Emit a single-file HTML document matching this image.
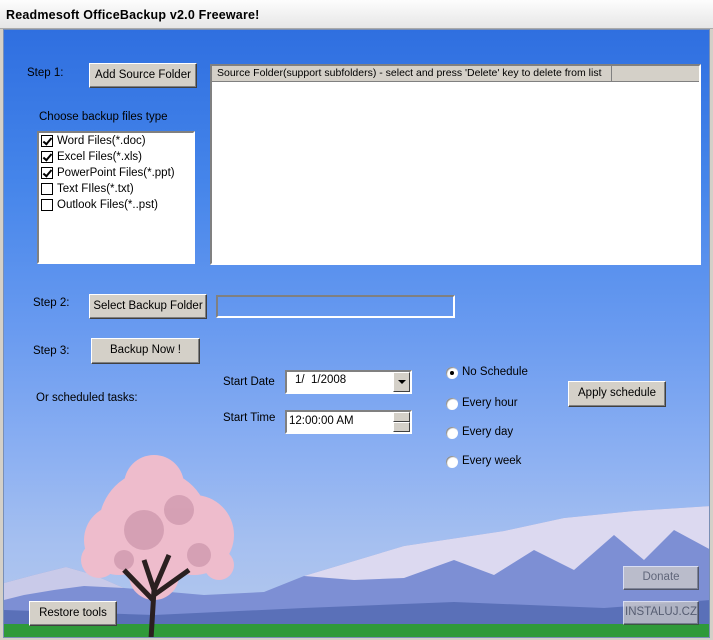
<!DOCTYPE html>
<html><head><meta charset="utf-8"><style>
*{margin:0;padding:0;box-sizing:border-box}
body{width:713px;height:640px;overflow:hidden;background:#d4d0c8;font-family:"Liberation Sans",Arial,sans-serif;font-size:11px;color:#000;position:relative}
.title{position:absolute;left:0;top:0;width:713px;height:29px;background:linear-gradient(#fdfdfd,#e6e6e6);border-bottom:1px solid #aaa;font-weight:bold;font-size:12.5px;padding:8px 0 0 6px;letter-spacing:0.2px}
.client{position:absolute;left:3px;top:29px;width:707px;height:609px;background:linear-gradient(#2f6fe0 0%,#4585ea 25%,#6a9bf0 50%,#8cb0f2 70%,#a6c0f0 85%,#b5c8ec 100%);overflow:hidden;border:1px solid #7a8fb5}
.a{position:absolute;white-space:nowrap;font-size:11.5px}
.btn{position:absolute;background:#d4d0c8;border:1px solid;border-color:#fff #404040 #404040 #fff;box-shadow:inset -1px -1px #808080;text-align:center;font-size:11.5px;color:#000;white-space:nowrap}
.lb{position:absolute;background:#fff;border:2px solid;border-color:#808080 #fff #fff #808080}
.cb{position:absolute;left:2px;width:12px;height:12px;border:1.5px solid #000;background:#fff}
.cb.c::after{content:"";position:absolute;left:3px;top:0px;width:3px;height:7px;border:solid #000;border-width:0 2px 2px 0;transform:rotate(40deg)}
.rd{position:absolute;width:12px;height:12px;border-radius:50%;background:#fff;box-shadow:inset 1px 1px 1px #888}
.rd.on::after{content:"";position:absolute;left:4px;top:4px;width:4px;height:4px;border-radius:50%;background:#000}
</style></head><body>
<div class="title">Readmesoft OfficeBackup v2.0 Freeware!</div>
<div class="client">
<svg width="707" height="609" style="position:absolute;left:0;top:0">
<polygon points="0,553 30,545 62,537 90,545 120,558 200,565 260,562 300,546 400,516 500,501 560,488 630,481 707,476 707,609 0,609" fill="#7d8fd4"/>
<polygon points="300,546 400,516 500,501 560,488 630,481 707,476 707,520 670,500 640,530 610,505 570,540 530,520 490,545 450,530 400,548 350,550" fill="#ece6f4" opacity="0.85"/>
<polygon points="0,553 30,545 62,537 90,545 120,558 80,556 50,560 20,565 0,570" fill="#dcd8ee" opacity="0.8"/>
<polygon points="0,580 150,585 300,578 450,572 600,578 707,570 707,609 0,609" fill="#5a70b8"/>
<rect x="0" y="594" width="707" height="15" fill="#2f9a3a"/>
<g fill="#eebccc">
<circle cx="150" cy="495" r="55"/><circle cx="115" cy="510" r="35"/><circle cx="190" cy="505" r="40"/><circle cx="150" cy="455" r="30"/><circle cx="95" cy="530" r="18"/><circle cx="215" cy="535" r="15"/><circle cx="150" cy="545" r="25"/>
</g>
<g fill="#b88098" opacity="0.45"><circle cx="140" cy="500" r="20"/><circle cx="175" cy="480" r="15"/><circle cx="120" cy="530" r="10"/><circle cx="195" cy="525" r="12"/></g>
<path d="M147 609 L150 560 L140 530 M150 560 L165 525 M149 570 L120 540 M150 565 L185 540" stroke="#2a2020" stroke-width="5" fill="none"/>
</svg>
<div class="a" style="left:23px;top:37px">Step 1:</div>
<div class="btn" style="left:85px;top:33px;width:108px;height:25px;line-height:22px">Add Source Folder</div>
<div class="lb" style="left:206px;top:34px;width:491px;height:201px">
<div style="height:16px;background:#d4d0c8;border-bottom:1px solid #808080;width:400px;border-right:1px solid #808080;padding:1px 0 0 5px;font-size:10.5px;white-space:nowrap;overflow:hidden">Source Folder(support subfolders) - select and press 'Delete' key to delete from list</div>
<div style="position:absolute;left:400px;top:0;right:0;height:16px;background:#d4d0c8;border-bottom:1px solid #808080"></div>
</div>
<div class="a" style="left:35px;top:81px">Choose backup files type</div>
<div class="lb" style="left:33px;top:101px;width:158px;height:133px;font-size:11.5px">
<div style="position:relative;height:16px;margin-top:2px"><div class="cb c"></div><span style="position:absolute;left:18px;top:0">Word Files(*.doc)</span></div>
<div style="position:relative;height:16px"><div class="cb c"></div><span style="position:absolute;left:18px;top:0">Excel Files(*.xls)</span></div>
<div style="position:relative;height:16px"><div class="cb c"></div><span style="position:absolute;left:18px;top:0">PowerPoint Files(*.ppt)</span></div>
<div style="position:relative;height:16px"><div class="cb"></div><span style="position:absolute;left:18px;top:0">Text FIles(*.txt)</span></div>
<div style="position:relative;height:16px"><div class="cb"></div><span style="position:absolute;left:18px;top:0">Outlook Files(*..pst)</span></div>
</div>
<div class="a" style="left:29px;top:267px">Step 2:</div>
<div class="btn" style="left:85px;top:264px;width:118px;height:25px;line-height:22px">Select Backup Folder</div>
<div style="position:absolute;left:212px;top:265px;width:239px;height:23px;border:2px solid;border-color:#808080 #fff #fff #808080"></div>
<div class="a" style="left:29px;top:315px">Step 3:</div>
<div class="btn" style="left:87px;top:308px;width:109px;height:26px;line-height:23px">Backup Now !</div>
<div class="a" style="left:32px;top:362px">Or scheduled tasks:</div>
<div class="a" style="left:219px;top:346px">Start Date</div>
<div class="lb" style="left:281px;top:340px;width:127px;height:24px;font-size:11.5px;padding:2px 0 0 8px">1/&nbsp; 1/2008
<div style="position:absolute;right:0;top:0;width:17px;height:20px;background:#d4d0c8;border:1px solid;border-color:#fff #404040 #404040 #fff"><div style="margin:7px auto 0;width:0;height:0;border:4px solid transparent;border-top:4px solid #000;border-bottom:0"></div></div></div>
<div class="a" style="left:219px;top:382px">Start Time</div>
<div class="lb" style="left:281px;top:380px;width:127px;height:24px;font-size:11.5px;padding:3px 0 0 2px">12:00:00 AM
<div style="position:absolute;right:0;top:0;width:17px;height:10px;background:#d4d0c8;border:1px solid;border-color:#fff #404040 #404040 #fff"></div>
<div style="position:absolute;right:0;top:10px;width:17px;height:10px;background:#d4d0c8;border:1px solid;border-color:#fff #404040 #404040 #fff"></div></div>
<div class="rd on" style="left:442px;top:337px"></div><div class="a" style="left:458px;top:336px">No Schedule</div>
<div class="rd" style="left:442px;top:368px"></div><div class="a" style="left:458px;top:367px">Every hour</div>
<div class="rd" style="left:442px;top:397px"></div><div class="a" style="left:458px;top:396px">Every day</div>
<div class="rd" style="left:442px;top:426px"></div><div class="a" style="left:458px;top:425px">Every week</div>
<div class="btn" style="left:564px;top:351px;width:98px;height:26px;line-height:23px">Apply schedule</div>
<div class="btn" style="left:25px;top:571px;width:88px;height:25px;line-height:22px">Restore tools</div>
<div class="btn" style="left:619px;top:536px;width:76px;height:24px;line-height:21px;opacity:0.7;color:#555">Donate</div>
<div class="btn" style="left:619px;top:571px;width:76px;height:24px;line-height:21px;opacity:0.7;color:#555">INSTALUJ.CZ</div>
</div>
</body></html>
